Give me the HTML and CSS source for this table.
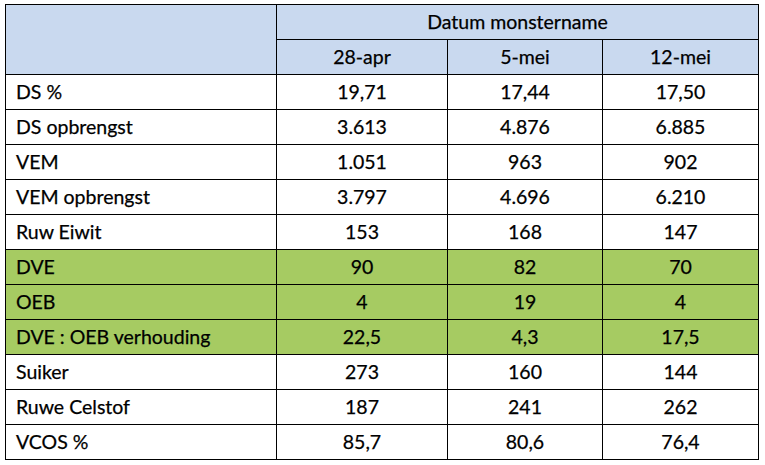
FILE: index.html
```html
<!DOCTYPE html>
<html>
<head>
<meta charset="utf-8">
<link rel="stylesheet" href="styles.css">
</head>
<body>
<table class="data">
  <colgroup>
    <col class="c-label">
    <col class="c-1">
    <col class="c-2">
    <col class="c-3">
  </colgroup>
  <thead>
    <tr class="head">
      <th rowspan="2"></th>
      <th colspan="3">Datum monstername</th>
    </tr>
    <tr class="head">
      <th>28-apr</th>
      <th>5-mei</th>
      <th>12-mei</th>
    </tr>
  </thead>
  <tbody>
    <tr><td>DS %</td><td>19,71</td><td>17,44</td><td>17,50</td></tr>
    <tr><td>DS opbrengst</td><td>3.613</td><td>4.876</td><td>6.885</td></tr>
    <tr><td>VEM</td><td>1.051</td><td>963</td><td>902</td></tr>
    <tr><td>VEM opbrengst</td><td>3.797</td><td>4.696</td><td>6.210</td></tr>
    <tr><td>Ruw Eiwit</td><td>153</td><td>168</td><td>147</td></tr>
    <tr class="green"><td>DVE</td><td>90</td><td>82</td><td>70</td></tr>
    <tr class="green"><td>OEB</td><td>4</td><td>19</td><td>4</td></tr>
    <tr class="green"><td>DVE : OEB verhouding</td><td>22,5</td><td>4,3</td><td>17,5</td></tr>
    <tr><td>Suiker</td><td>273</td><td>160</td><td>144</td></tr>
    <tr><td>Ruwe Celstof</td><td>187</td><td>241</td><td>262</td></tr>
    <tr><td>VCOS %</td><td>85,7</td><td>80,6</td><td>76,4</td></tr>
  </tbody>
</table>
</body>
</html>
```
FILE: styles.css
```css
html, body {
  margin: 0;
  background: #ffffff;
}
body {
  padding: 4px 0 0 5px;
  font-family: Lato, "Liberation Sans", sans-serif;
  color: #000;
}
.data {
  border-collapse: collapse;
  table-layout: fixed;
  width: 754px;
}
.c-label { width: 271px; }
.c-1 { width: 171px; }
.c-2 { width: 155px; }
.c-3 { width: 156px; }
.data th, .data td {
  border: 1px solid #000;
  height: 34px;
  padding: 0;
  font-size: 19.5px;
  font-weight: 400;
  text-align: center;
  vertical-align: middle;
  line-height: 1;
  -webkit-text-stroke: 0.25px #000;
}
.data td:first-child {
  text-align: left;
  padding-left: 10px;
}
.head th {
  background: #c9d9ef;
}
.green td {
  background: #a6cb62;
}
```
